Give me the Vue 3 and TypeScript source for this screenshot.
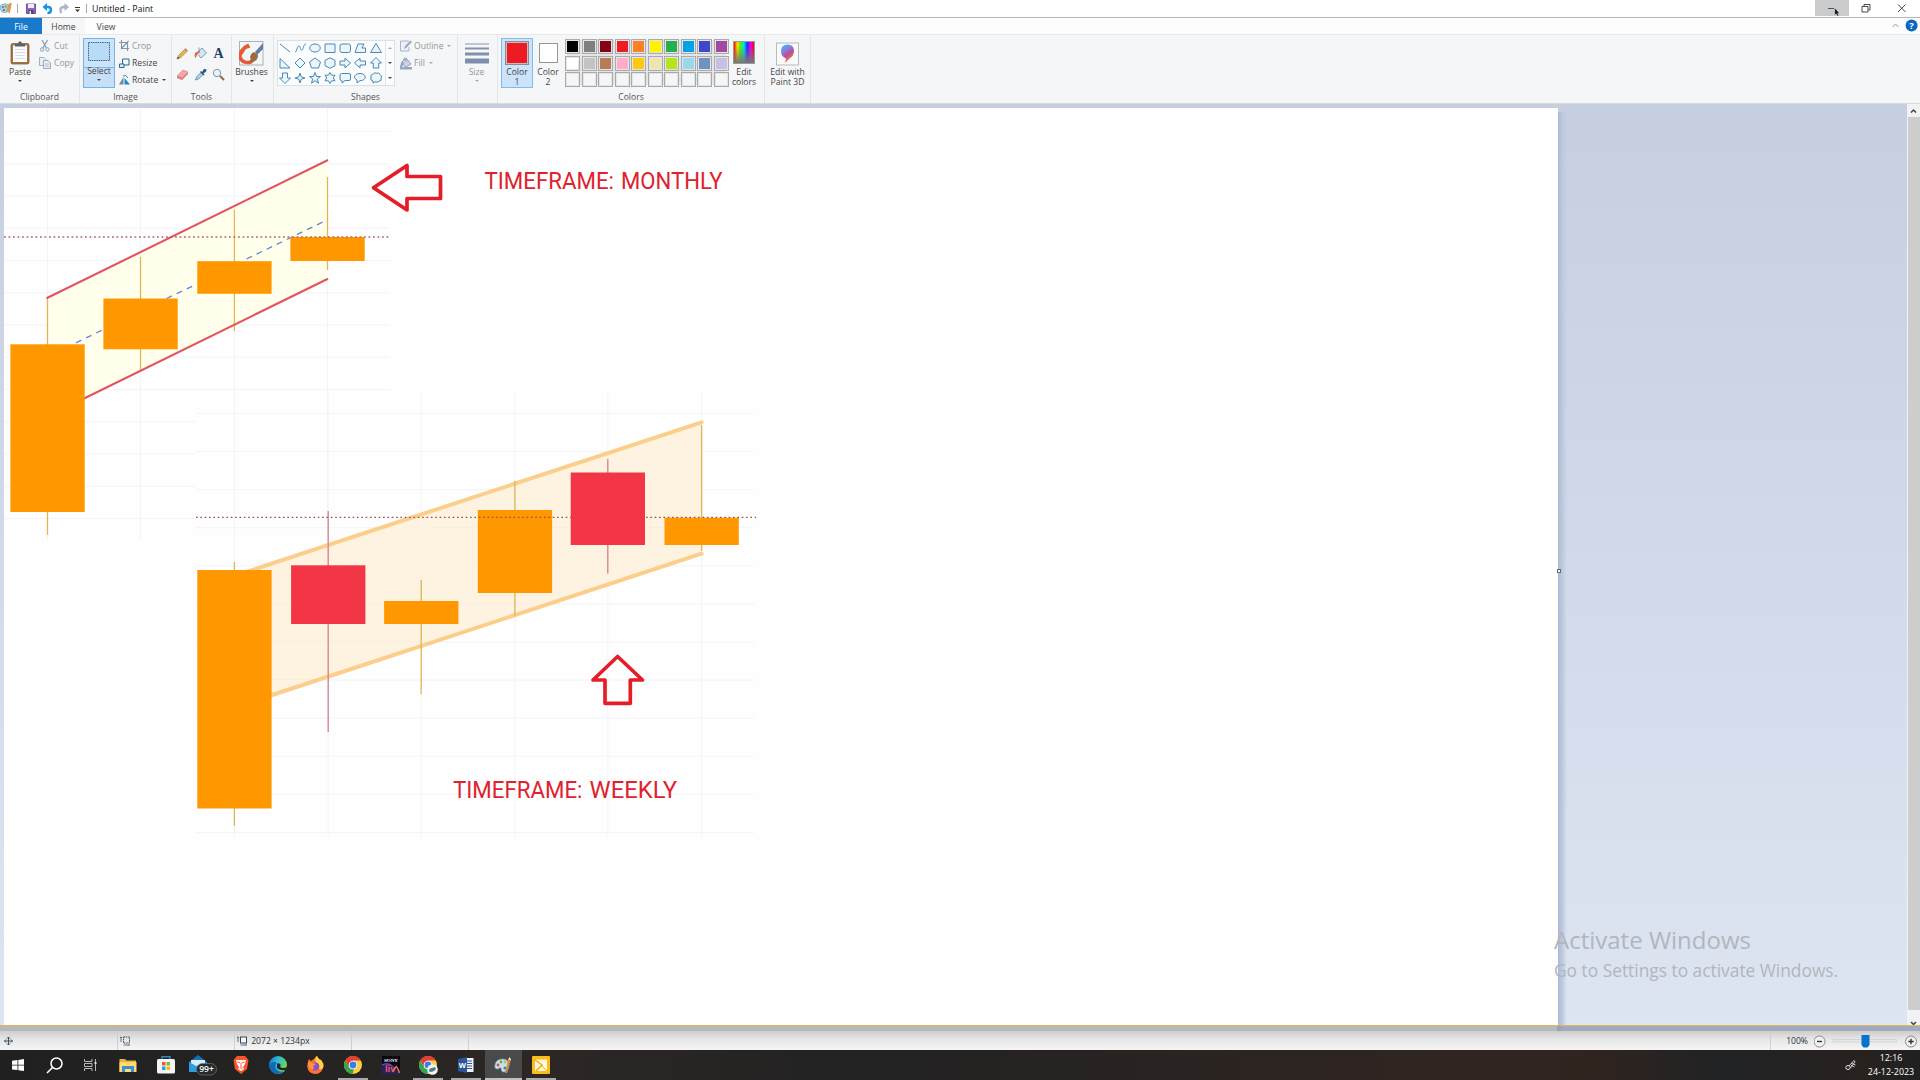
<script setup lang="ts">
interface Candle {
  x: number
  top: number
  bottom: number
  high: number
  low: number
  down?: boolean
}

const shapes: string[] = [
  'M1 2L11 10',
  'M1 10C3 10 3 4 5 4S6 9 8 8S9 2 12 2',
  'M6 2C13 2 13 10 6 10S-1 2 6 2Z',
  'M1 2H11V10.500H1Z',
  'M3 2H9.500Q11.500 2 11.500 4V8.500Q11.500 10.500 9.500 10.500H3Q1 10.500 1 8.500V4Q1 2 3 2Z',
  'M4 2H10L8 6H11.500V10.500H1Z',
  'M6 1.500L11.500 10.500H.5Z',
  'M1 1.500V11H11Z',
  'M6 1L11 6L6 11L1 6Z',
  'M6 1L11.500 5L9.500 11H2.500L.5 5Z',
  'M6 .8L11 3.400V8.700L6 11.300L1 8.700V3.400Z',
  'M1 4H6V1L11.500 6L6 11V8H1Z',
  'M11.500 4H6V1L.5 6L6 11V8H11.500Z',
  'M6 .5L11.500 6H8.700V11H3.300V6H.5Z',
  'M6 11.500L11.500 6H8.500V1H3.500V6H.5Z',
  'M6 1L7.200 4.800L11 6L7.200 7.200L6 11L4.800 7.200L1 6L4.800 4.800Z',
  'M6 .5L7.500 4.500H11.500L8.300 7L9.500 11.200L6 8.700L2.500 11.200L3.700 7L.5 4.500H4.500Z',
  'M6 .5L7.600 3.200H11L9.300 6L11 8.800H7.600L6 11.500L4.400 8.800H1L2.700 6L1 3.200H4.400Z',
  'M2.500 1.500H10Q11.500 1.500 11.500 3V7Q11.500 8.500 10 8.500H6L3 11V8.500H2.500Q1 8.500 1 7V3Q1 1.500 2.500 1.500Z',
  'M6 1.500C13 1.500 13 8.700 6 8.700L3 11V8C-1.500 6 .5 1.500 6 1.500Z',
  'M3 2Q4.500 0 6.500 1.300Q9 0 10 2.500Q12.500 4 11.200 6Q12 9 9 9.300Q7 11 5 9.700L3 11.200V9Q0 8.500 1 6Q-.3 3 3 2Z',
]

const palette: string[] = [
  '#000000', '#7f7f7f', '#880015', '#ed1c24', '#ff7f27', '#fff200', '#22b14c', '#00a2e8', '#3f48cc', '#a349a4',
  '#ffffff', '#c3c3c3', '#b97a57', '#ffaec9', '#ffc90e', '#efe4b0', '#b5e61d', '#99d9ea', '#7092be', '#c8bfe7',
  '', '', '', '', '', '', '', '', '', '',
]

const monthly: Candle[] = [
  { x: 47.5, top: 344.3, bottom: 512, high: 298, low: 535 },
  { x: 140.5, top: 298.5, bottom: 349.3, high: 257, low: 370 },
  { x: 234.4, top: 261.2, bottom: 293.8, high: 210, low: 331 },
  { x: 327.5, top: 237, bottom: 261, high: 177, low: 270 },
]

const weekly: Candle[] = [
  { x: 234.4, top: 570, bottom: 808.5, high: 562, low: 826 },
  { x: 328.2, top: 565.3, bottom: 624, high: 511, low: 732, down: true },
  { x: 421.2, top: 601, bottom: 624, high: 580, low: 694 },
  { x: 514.9, top: 510, bottom: 593, high: 481, low: 616 },
  { x: 607.8, top: 472.5, bottom: 545, high: 459, low: 573.5, down: true },
  { x: 701.6, top: 517.7, bottom: 545, high: 425, low: 551 },
]

const monthlyRows: number[] = Array.from({ length: 13 }, (_, i) => 131.5 + i * 32.25)
const weeklyRows: number[] = Array.from({ length: 12 }, (_, i) => 413.4 + i * 38.1)
</script>

<template>
  <div class="screen">
    <header class="title">
      <svg class="quick" width="90" height="17" viewBox="0 0 90 17">
        <path d="M.5 9Q-1 4 4 4Q9 3 9.500 8Q9 13 4 12.500Q1 12.500 .5 9Z" fill="#a9d3e5" stroke="#6ba3bd" stroke-width=".7" />
        <circle cx="3" cy="7" r="1.100" fill="#d2504b" /><circle cx="5.800" cy="6.500" r="1.100" fill="#6eac47" /><circle cx="4" cy="10" r="1.100" fill="#3979b8" />
        <path d="M7 11.500L9.500 3.500M9 13L11 3" stroke="#e09643" stroke-width="1.600" />
        <path d="M17.500 4V13M86.500 4V13" stroke="#a5a5a5" />
        <path d="M26.500 4H35.500V13.500H26.500Z" fill="#8d69b5" stroke="#70539b" /><path d="M28 4H34V8H28Z" fill="#f1edf8" /><path d="M28.500 10H33.500V14H28.500Z" fill="#57417d" /><path d="M29.500 11H31V14H29.500Z" fill="#eee" />
        <path d="M45 7H48Q51 7 51 10Q51 13 47.500 13" fill="none" stroke="#1597df" stroke-width="2.400" /><path d="M42.500 7L47 3V11Z" fill="#1597df" />
        <path d="M67 7H64Q60.500 7 60.500 10Q60.500 12 61.500 13" fill="none" stroke="#a9b6c9" stroke-width="2.400" /><path d="M69 7L64.500 3V11Z" fill="#a9b6c9" />
        <path d="M75 7.500H80" stroke="#333" /><path d="M75 9.500H80L77.500 12Z" fill="#333" />
      </svg>
      <span class="caption">Untitled - Paint</span>
      <span class="grow"></span>
      <svg width="105" height="17" viewBox="0 0 105 17">
        <path d="M0 0H34V16H0Z" fill="#cacbcc" />
        <path d="M13 8.500H19" stroke="#555" />
        <path d="M47.500 6.500H53.500V12H47.500ZM49.500 6V4.500H55.500V10H54" transform="translate(-.5 0)" fill="none" stroke="#333" stroke-width=".9" />
        <path d="M83 4.500L90.500 12M90.500 4.500L83 12" stroke="#333" stroke-width=".9" />
        <path d="M19.800 8V15L21.300 13.700L22.300 16L23.600 15.400L22.600 13.200H24.300Z" fill="#111" stroke="#eee" stroke-width=".3" />
      </svg>
    </header>

    <nav class="tabs">
      <span class="tab file">File</span>
      <span class="tab home">Home</span>
      <span class="tab view">View</span>
      <span class="grow"></span>
      <svg width="32" height="16" viewBox="0 0 32 16">
        <path d="M4.500 9L7.500 6L10.500 9" fill="none" stroke="#999" />
        <circle cx="23.600" cy="7.600" r="6" fill="#0a68bd" />
        <text x="23.600" y="11" text-anchor="middle" font-size="9.500" font-weight="700" fill="#fff">?</text>
      </svg>
    </nav>

    <section class="ribbon">
      <div class="group clipboard">
        <div class="body">
          <div class="big paste">
            <svg width="20" height="25" viewBox="0 0 20 25">
              <rect x="1" y="3" width="18" height="20.500" rx="1.500" fill="#a47644" stroke="#7d5730" stroke-width=".7" />
              <path d="M3 5H17V21.500H3Z" fill="#fbfcfd" /><path d="M5 9H15M5 12H15M5 15H15M5 18H15" stroke="#cad0d7" stroke-width=".7" />
              <path d="M5 6V3.500H8Q8 .8 10 .8T12 3.500H15V6Z" fill="#5e6268" />
            </svg>
            <span>Paste</span><i class="caret"></i>
          </div>
          <div class="stack dim">
            <div class="row"><svg width="12" height="12" viewBox="0 0 12 12"><path d="M3 0L7.500 8M8.500 0L4 8" stroke="#8d9db3" stroke-width="1.300" /><circle cx="3" cy="9.500" r="1.700" fill="none" stroke="#8d9db3" /><circle cx="8.500" cy="9.500" r="1.700" fill="none" stroke="#8d9db3" /></svg><span>Cut</span></div>
            <div class="row"><svg width="12" height="12" viewBox="0 0 12 12"><path d="M.5 .5H5L7 2.500V8.500H.5Z" fill="#e9eef4" stroke="#a1b0c4" /><path d="M4.500 3.500H9L11.500 6V11.500H4.500Z" fill="#e9eef4" stroke="#9aabc1" /><path d="M6 7H10M6 9H10" stroke="#a1b0c4" stroke-width=".8" /></svg><span>Copy</span></div>
          </div>
        </div>
        <footer>Clipboard</footer>
      </div>

      <div class="group image">
        <div class="body">
          <div class="big select">
            <svg width="24" height="24" viewBox="0 0 24 24"><rect x="1.500" y="2.500" width="21" height="18" fill="#b8dbf8" stroke="#3a6687" stroke-dasharray="1.500 .8" /></svg>
            <span>Select</span><i class="caret"></i>
          </div>
          <div class="stack tall">
            <div class="row dim"><svg width="11" height="12" viewBox="0 0 11 12"><path d="M2.500 0V8.500H10M0 2.500H8.500V11M2 9L9.500 1" fill="none" stroke="#8295ad" stroke-width="1.100" /></svg><span>Crop</span></div>
            <div class="row"><svg width="11" height="12" viewBox="0 0 11 12"><path d="M3.500 2H10V8H3.500Z" fill="#eef7fd" stroke="#2d6991" /><path d="M.5 7H5V10.500H.5Z" fill="#d7edf9" stroke="#2d6991" /></svg><span>Resize</span></div>
            <div class="row"><svg width="11" height="12" viewBox="0 0 11 12"><path d="M0 10.500L4.500 3V10.500Z" fill="#73889d" /><path d="M5.500 10.500V4L11 10.500Z" fill="#1c87c9" /><path d="M4 2Q7 0 9 4" fill="none" stroke="#3c8bc0" /></svg><span>Rotate</span><i class="caret side"></i></div>
          </div>
        </div>
        <footer>Image</footer>
      </div>

      <div class="group tools">
        <div class="toolgrid">
          <svg viewBox="0 0 13 13"><path d="M1 12L2.500 8.500L9.500 1.500L11.700 3.700L4.500 10.800Z" fill="#e7b34f" stroke="#a27935" stroke-width=".6" /><path d="M9.500 1.500L11.700 3.700L10.400 5L8.200 2.800Z" fill="#dc8985" /><path d="M1 12L2 9.800L3.300 11Z" fill="#333" /></svg>
          <svg viewBox="0 0 13 13"><path d="M4 5L8 1L12.500 6L7 11L3.500 7Z" fill="#d5e5f1" stroke="#648cad" stroke-width=".8" /><path d="M5 .5V6" stroke="#677" stroke-width=".7" /><path d="M5 4L1 6Q0 9 1.500 11Q3 9 3 7L6 5Z" fill="#e95d31" /></svg>
          <svg viewBox="0 0 13 13"><text x="6.500" y="11.200" text-anchor="middle" class="serif" font-size="14" font-weight="700" fill="#23405d">A</text></svg>
          <svg viewBox="0 0 13 13"><path d="M1 8L7 2L12 4L6 10Z" fill="#f3a9a7" stroke="#c96c6c" stroke-width=".5" /><path d="M1 8L6 10V12L1 10ZM6 10L12 4V6L6 12Z" fill="#de7979" /></svg>
          <svg viewBox="0 0 13 13"><path d="M1.500 12L2.500 9L7 4.500L9 6.500L4.500 11Z" fill="#a9d8ef" stroke="#40789d" stroke-width=".7" /><path d="M6 4L7 3L8 4L10 1Q12 .5 12.500 2Q13 3 9.500 5.500L10.500 6.500L9.500 7.500Z" fill="#285781" /></svg>
          <svg viewBox="0 0 13 13"><circle cx="5" cy="5" r="3.700" fill="#e2f1fa" stroke="#8796a4" /><path d="M8 8L12 12" stroke="#886d50" stroke-width="2" /></svg>
        </div>
        <footer>Tools</footer>
      </div>

      <div class="group brushes">
        <div class="big">
          <svg width="25" height="26" viewBox="0 0 25 26"><rect x=".5" y="1.500" width="23.500" height="23.500" fill="#f4f7fa" stroke="#aab1ba" /><path d="M10 5Q1 9 1 17Q3 24 12 22L16 18" fill="none" stroke="#e55b35" stroke-width="3.500" /><path d="M3 14Q6 6 11 7" fill="none" stroke="#e96036" stroke-width="2" /><path d="M16 12L24 3V9L18 15Z" fill="#607e9e" /><path d="M15 12L19 15Q19 23 9 22Q13 21 11 17Q12 13 15 12Z" fill="#9c6a3f" /></svg>
          <span>Brushes</span><i class="caret"></i>
        </div>
      </div>

      <div class="group shapes">
        <div class="body">
          <div class="gallery">
            <div class="shapegrid">
              <svg v-for="(path, i) in shapes" :key="i" viewBox="0 0 13 12.500"><path :d="path" :fill="i < 2 ? 'none' : '#eaf5fc'" stroke="#4384b0" stroke-width=".95" /></svg>
            </div>
            <div class="scroll"><i class="caret up"></i><i class="caret"></i><i class="caret more"></i></div>
          </div>
          <div class="stack dim">
            <div class="row"><svg width="12" height="12" viewBox="0 0 12 12"><path d="M9 1H.5V11H9V7" fill="#edf1f7" stroke="#a9b6cb" /><path d="M4 9L5 6L10.500 .5L12 2L6.500 7.500Z" fill="#9aa9c2" /></svg><span>Outline</span><i class="caret side"></i></div>
            <div class="row"><svg width="12" height="13" viewBox="0 0 12 13"><path d="M2 5L6 1L11 7L6 10L2 7Z" fill="#cbd5e4" stroke="#8fa0bb" /><path d="M4 4V1.500Q5 0 6 2V5" fill="none" stroke="#8fa0bb" /><path d="M0 10H12V12.500H0Z" fill="#97a7c1" /><path d="M1 6Q3 4 4 6L2 10H0Z" fill="#92a2be" /></svg><span>Fill</span><i class="caret side"></i></div>
          </div>
        </div>
        <footer>Shapes</footer>
      </div>

      <div class="group size dim">
        <div class="big">
          <svg width="24" height="25" viewBox="0 0 24 25"><path d="M0 3.500H24" stroke="#8795b1" /><path d="M0 8H24" stroke="#8391ad" stroke-width="2" /><path d="M0 13.500H24" stroke="#8190ad" stroke-width="3" /><path d="M0 20.500H24" stroke="#7d8dac" stroke-width="5" /></svg>
          <span>Size</span><i class="caret"></i>
        </div>
      </div>

      <div class="group colors">
        <div class="body">
          <div class="big color one"><b class="swatch red"></b><span>Color</span><span>1</span></div>
          <div class="big color two"><b class="swatch white"></b><span>Color</span><span>2</span></div>
          <div class="palette"><i v-for="(c, i) in palette" :key="i" :style="{ background: c || '#f5f6f7' }"></i></div>
          <div class="big edit"><b class="spectrum"></b><span>Edit</span><span>colors</span></div>
        </div>
        <footer>Colors</footer>
      </div>

      <div class="group paint3d">
        <div class="big">
          <svg width="23" height="25" viewBox="0 0 23 25">
            <defs><linearGradient id="drop" x1="0" y1="0" x2=".5" y2="1"><stop offset="0" stop-color="#35c5ef" /><stop offset=".35" stop-color="#7e86e5" /><stop offset=".65" stop-color="#c1489b" /><stop offset="1" stop-color="#f08a35" /></linearGradient></defs>
            <rect x=".5" y="2.500" width="22" height="22" fill="#fafafa" stroke="#b6b9bd" />
            <path d="M11.500 4Q18 4 18 10.500Q18 15 13.500 18L9 22.500L10 18Q5 16 5 10.500Q5 4 11.500 4Z" fill="url(#drop)" />
          </svg>
          <span>Edit with</span><span>Paint 3D</span>
        </div>
      </div>
    </section>

    <main class="workspace">
      <div class="sheet">
        <svg width="1553" height="917" viewBox="4 108 1553 917">
          <g stroke="#f3f3f9" stroke-width="1">
            <line v-for="(y, i) in monthlyRows" :key="'m' + i" x1="4" :x2="i > 8 ? 195 : 390" :y1="y" :y2="y" />
            <line v-for="c in monthly" :key="'mv' + c.x" :x1="c.x" :x2="c.x" y1="108" y2="541" />
          </g>
          <polygon points="47.500,298 328,160 328,279 47.500,416" fill="#ffffec" />
          <g stroke="#f5f5e5"><line x1="140.500" x2="140.500" y1="252" y2="370" /><line x1="234.500" x2="234.500" y1="206" y2="324" /></g>
          <path d="M76 342.800L103 329.700M166.500 298.500L197 284M246.500 259L328 219.500" stroke="#6385d8" stroke-width="1.300" stroke-dasharray="6 5.200" />
          <g v-for="c in monthly" :key="'mc' + c.x">
            <line :x1="c.x" :x2="c.x" :y1="c.high" :y2="c.low" stroke="#e2b653" stroke-width="1.300" />
          </g>
          <path d="M46.500 298.300L328 160M83 399L328 278.700" fill="none" stroke="#e2545f" stroke-width="2.100" />
          <rect v-for="c in monthly" :key="'mb' + c.x" :x="c.x - 37.1" :y="c.top" width="74.3" :height="c.bottom - c.top" fill="#ff9800" />
          <line x1="4" x2="389" y1="237" y2="237" stroke="#b85f6e" stroke-width="1.500" stroke-dasharray="1.800 2.700" />

          <g stroke="#f3f3f9">
            <line v-for="y in weeklyRows" :key="y" x1="196" x2="754" :y1="y" :y2="y" />
            <line v-for="c in weekly" :key="'wv' + c.x" :x1="c.x" :x2="c.x" y1="392" y2="837" />
          </g>
          <polygon points="235,577 701.600,422.500 701.600,553.700 235,707.700" fill="#fef2e0" />
          <g stroke="#faeedf"><path d="M328.200 547V676M421.200 516V646M514.900 485V616M607.800 454V584M430 527.500H701M340 565.700H664M272 604H548M272 641.500H436M272 679.500H320" /></g>
          <path d="M240 574L701.600 422.300M260 699L701.600 553.700" stroke="#fbcf8b" stroke-width="4" stroke-linecap="round" />
          <line v-for="c in weekly" :key="'ww' + c.x" :x1="c.x" :x2="c.x" :y1="c.high" :y2="c.low" :stroke="c.down ? '#d37f8c' : '#deb552'" stroke-width="1.300" />
          <rect v-for="c in weekly" :key="'wb' + c.x" :x="c.x - 37.1" :y="c.top" width="74.3" :height="c.bottom - c.top" :fill="c.down ? '#f23645' : '#ff9800'" />
          <path d="M196 517.400H571M646 517.400H756" stroke="#9c4c4e" stroke-width="1.400" stroke-dasharray="1.600 2.750" />

          <g fill="none" stroke="#e51d28" stroke-width="3.700" stroke-linejoin="round">
            <path d="M373.500 187.700L407 165.500V176.500H440.500V198.500H407V210Z" />
            <path d="M617.600 656.500L642.500 680H630.300V703.300H605V680H593Z" />
          </g>
          <g class="note" font-size="23.200" fill="#df222e">
            <text y="189.300"><tspan x="484.500" textLength="129.500" lengthAdjust="spacingAndGlyphs">TIMEFRAME:</tspan>&#32;<tspan x="621" textLength="101.500" lengthAdjust="spacingAndGlyphs">MONTHLY</tspan></text>
            <text y="798"><tspan x="453" textLength="129.500" lengthAdjust="spacingAndGlyphs">TIMEFRAME:</tspan>&#32;<tspan x="589.500" textLength="87.500" lengthAdjust="spacingAndGlyphs">WEEKLY</tspan></text>
          </g>
        </svg>
        <i class="handle"></i>
      </div>
      <div class="surround"></div>
      <div class="scrollbar">
        <svg width="13" height="13" viewBox="0 0 13 13"><path d="M4 8.500L6.500 6L9 8.500" fill="none" stroke="#444" stroke-width="1.500" /></svg>
        <div class="thumb"></div>
        <svg width="13" height="16" viewBox="0 0 13 16"><path d="M4 12L6.500 14.500L9 12" fill="none" stroke="#444" stroke-width="1.500" /></svg>
      </div>
      <div class="watermark"><strong>Activate Windows</strong><span>Go to Settings to activate Windows.</span></div>
    </main>

    <div class="edge"></div>
    <section class="status">
      <div class="cell first"><svg width="9" height="10" viewBox="0 0 9 10"><path d="M4.500 1V9M.5 5H8.500M3 2.500L4.500 1L6 2.500M3 7.500L4.500 9L6 7.500M2 3.500L.5 5L2 6.500M7 3.500L8.500 5L7 6.500" fill="none" stroke="#33465d" stroke-width=".9" /></svg></div>
      <div class="cell"><svg width="11" height="10" viewBox="0 0 11 10"><path d="M1 1V6M0 2L1 .8L2 2M3.500 9H9M8.500 8L9.700 9L8.500 10" fill="none" stroke="#53657a" stroke-width=".9" /><rect x="3.500" y="1" width="6" height="6" fill="none" stroke="#33465d" stroke-dasharray="1.500 .8" /></svg></div>
      <div class="cell"><svg width="11" height="10" viewBox="0 0 11 10"><path d="M1 1V6M0 2L1 .8L2 2M3.500 9H9M8.500 8L9.700 9L8.500 10" fill="none" stroke="#53657a" stroke-width=".9" /><rect x="3.500" y="1" width="6" height="6" fill="#fafafa" stroke="#33465d" /></svg><span>2072 × 1234px</span></div>
      <div class="cell"></div>
      <div class="cell wide"></div>
      <div class="zoom">
        <span>100%</span>
        <svg width="106" height="19" viewBox="0 0 106 19">
          <circle cx="5.500" cy="9.500" r="5.500" fill="#f2f2f2" stroke="#888" /><path d="M3 9.500H8" stroke="#333" stroke-width="1.400" />
          <rect x="19.500" y="7.500" width="63" height="2.500" fill="#e6e6e6" stroke="#d0d0d0" stroke-width=".8" />
          <path d="M47.500 3H55.500V13L53.500 15.500H49.500L47.500 13Z" fill="#0873cc" />
          <circle cx="97" cy="9.500" r="5.500" fill="#f2f2f2" stroke="#888" /><path d="M94.300 9.500H99.700M97 6.800V12.200" stroke="#333" stroke-width="1.400" />
        </svg>
      </div>
    </section>

    <footer class="taskbar">
      <div class="slot sys"><svg width="12" height="12" viewBox="0 0 12 12"><path d="M0 1.700L5.500 1V5.700H0ZM6.300 .9L12 0V5.700H6.300ZM0 6.400H5.500V11.100L0 10.400ZM6.300 6.400H12V12L6.300 11.200Z" fill="#fff" /></svg></div>
      <div class="slot sys"><svg width="17" height="17" viewBox="0 0 17 17"><circle cx="10.500" cy="6.500" r="5.500" fill="none" stroke="#fff" stroke-width="1.500" /><path d="M6.500 10.500L1 16" stroke="#fff" stroke-width="1.600" /></svg></div>
      <div class="slot sys"><svg width="13" height="12" viewBox="0 0 13 12"><path d="M.5 0V2.500H8V0M.5 12V9.500H8V12M.5 4.500H8V7.500H.5ZM11.500 0V12" fill="none" stroke="#b8b8b8" /><path d="M10.500 3H12.500V5H10.500Z" fill="#ddd" /></svg></div>
      <div class="slot first"><svg width="18" height="15" viewBox="0 0 18 15"><path d="M.5 1H6L7.500 2.500H17V14H.5Z" fill="#e9b23d" /><path d="M.5 4H17.500V14H.5Z" fill="#ffda74" /><path d="M3 8H15V14H12V11H6V14H3Z" fill="#3c8fd2" /></svg></div>
      <div class="slot"><svg width="18" height="18" viewBox="0 0 18 18"><path d="M5 4V.7H13V4" fill="none" stroke="#3189b5" stroke-width="1.400" /><rect y="3" width="18" height="14.500" rx="1.500" fill="#f3f4f4" /><path d="M5 6H8.500V9.500H5Z" fill="#f15a29" /><path d="M9.500 6H13V9.500H9.500Z" fill="#7ebb3b" /><path d="M5 10.500H8.500V14H5Z" fill="#25a0dc" /><path d="M9.500 10.500H13V14H9.500Z" fill="#fbb914" /></svg></div>
      <div class="slot"><svg class="mail" width="30" height="22" viewBox="0 0 30 22"><path d="M1 8L10 1L19 8V18H1Z" fill="#1670b5" /><path d="M3 6H17V14H3Z" fill="#d5eefb" /><path d="M1 8L10 13L19 8V18H1Z" fill="#2b9de0" /><rect x="8.500" y="9.500" width="20" height="11.500" rx="5.750" fill="#252a2d" stroke="#747474" stroke-width=".7" /><text x="18.500" y="18.300" text-anchor="middle" font-size="8.600" font-weight="600" fill="#fff">99+</text></svg></div>
      <div class="slot"><svg width="16" height="18" viewBox="0 0 16 18"><path d="M4 0H12L15.500 4L14 13L8 18L2 13L.5 4Z" fill="#fb542b" /><path d="M3 4H13L12 8L10 11L11 13L8 15L5 13L6 11L4 8Z" fill="#fff" /><path d="M4.500 6L7 7M11.500 6L9 7M8 7V11M6.500 12H9.500" stroke="#fb542b" stroke-width="1" /></svg></div>
      <div class="slot"><svg width="18" height="18" viewBox="0 0 18 18"><defs><linearGradient id="sea" x2="1" y2=".3"><stop stop-color="#1876ca" /><stop offset=".5" stop-color="#2bb8de" /><stop offset="1" stop-color="#6ad950" /></linearGradient></defs><circle cx="9" cy="9" r="9" fill="url(#sea)" /><path d="M0 9Q3 4 8 7Q5 9 7 13Q10 17 15 15Q12 18 8 18Q1 17 0 9Z" fill="#1267b8" /><path d="M9 7Q13 8 11 11Q14 13 18 11L17 14Q11 15 8 12Q7 9 9 7Z" fill="#22282b" /></svg></div>
      <div class="slot"><svg width="17" height="18" viewBox="0 0 17 18"><path d="M2 3L4 5L7 3Q9 0 10 0Q11 3 14 4Q18 8 16 12Q14 18 8 18Q1 17 .3 11Q0 7 2 3Z" fill="#ff7332" /><path d="M10 0Q11 3 14 4Q17 8 16 12Q14 14 12 13Q14 8 9 6Q7 4 10 0Z" fill="#ffd743" /><circle cx="8" cy="10.500" r="4" fill="#8750d9" /><path d="M1 6L5 7L9 8L6 10L7 13Q3 14 2 10Z" fill="#ff9830" /></svg></div>
      <div class="slot open"><svg width="18" height="18" viewBox="0 0 18 18"><circle cx="9" cy="9" r="9" fill="#ffce42" /><path d="M1.200 4.500A9 9 0 0 1 16.800 4.500H9L5.100 11.300Z" fill="#e33f34" /><path d="M1.200 4.500L5.100 11.300Q7 14 10 13L8.500 18A9 9 0 0 1 1.200 4.500Z" fill="#30a852" /><circle cx="9" cy="9" r="4.300" fill="#fff" /><circle cx="9" cy="9" r="3.400" fill="#3b7de5" /></svg></div>
      <div class="slot"><svg class="live" width="18" height="18" viewBox="0 0 18 18"><rect width="18" height="18" fill="#080714" /><path d="M0 8Q6 5 10 9T18 15V18H0Z" fill="#29205d" /><path d="M0 9Q7 6 11 11" stroke="#6f47bd" fill="none" stroke-width="1.200" /><path d="M11 16L14 10.500Q15.500 11 17.500 17" stroke="#ee7a3d" fill="none" stroke-width="1.400" /><text x="9" y="5.500" text-anchor="middle" class="serif" font-size="4.800" font-weight="700" fill="#fff" textLength="14" lengthAdjust="spacingAndGlyphs">SONY</text><text x="3" y="16" font-size="8.500" font-weight="700" fill="#ee5a72">liv</text></svg></div>
      <div class="slot open split"><svg width="20" height="19" viewBox="-1 0 20 19"><circle cx="9" cy="9" r="9" fill="#ffce42" /><path d="M1.200 4.500A9 9 0 0 1 16.800 4.500H9L5.100 11.300Z" fill="#e33f34" /><path d="M1.200 4.500L5.100 11.300Q7 14 10 13L8.500 18A9 9 0 0 1 1.200 4.500Z" fill="#30a852" /><circle cx="9" cy="9" r="4.300" fill="#fff" /><circle cx="9" cy="9" r="3.400" fill="#3b7de5" /><circle cx="13.500" cy="13.500" r="5.300" fill="#f2f4f4" /><path d="M10 15Q10 12 13 12L16 11L17 13Q15 16 11 16Z" fill="#527e80" /></svg></div>
      <div class="slot open"><svg width="16" height="16" viewBox="0 0 16 16"><path d="M7 1H15.500V15H7Z" fill="#eef3fb" /><path d="M9 4H14M9 6.500H14M9 9H14M9 11.500H14" stroke="#2b579a" stroke-width="1" /><path d="M0 2L9 0V16L0 14Z" fill="#2b579a" /><text x="4.400" y="10.700" text-anchor="middle" font-size="7.500" font-weight="700" fill="#fff">W</text></svg></div>
      <div class="slot open current"><svg width="18" height="18" viewBox="0 0 18 18"><path d="M1 9Q2 3 9 3Q16 4 15 10Q14 16 9 16Q7 15 7 12Q6 11 4 13Q0 13 1 9Z" fill="#c7e1e9" stroke="#82acbb" stroke-width=".7" /><circle cx="4" cy="9" r="1.400" fill="#d64a42" /><circle cx="7" cy="6" r="1.400" fill="#68ac4b" /><circle cx="11" cy="6" r="1.400" fill="#e3b62f" /><circle cx="11" cy="12" r="1.500" fill="#3782bf" /><path d="M11 17L14 4L16 1L17 4L13 17Z" fill="#cc8949" /><path d="M14 4L15.500 1L17 4Z" fill="#efe0c0" /></svg></div>
      <div class="slot open"><svg width="18" height="18" viewBox="0 0 18 18"><rect width="18" height="18" rx="1" fill="#fbbd16" /><rect x="3" y="3.500" width="12" height="11.500" fill="#fff8df" /><path d="M2.500 3.500L10 9L4 15" fill="none" stroke="#f3ad12" stroke-width="1.500" /><path d="M9 9L15 15" stroke="#f3ad12" stroke-width="1" /></svg></div>
      <span class="grow"></span>
      <svg class="tray" width="12" height="12" viewBox="0 0 12 12"><ellipse cx="3" cy="8.500" rx="2.200" ry="2" fill="none" stroke="#ddd" /><path d="M4 7L9 1.500L10 3L5.500 9M6 4L10.500 6M6 6L9.500 8" fill="none" stroke="#ddd" stroke-width=".9" /></svg>
      <div class="clock"><span>12:16</span><span>24-12-2023</span></div>
    </footer>
  </div>
</template>

<style>
body { margin: 0; overflow: hidden; }
</style>

<style scoped>
.screen { width: 1920px; height: 1080px; display: flex; flex-direction: column; overflow: hidden; background: #fff; color: #444; font: 8.6px/10px "Open Sans", "Noto Sans", sans-serif; }
svg { display: block; flex: none; }
.serif { font-family: "Liberation Serif", serif; }
.grow { flex: 1; }
.title { height: 17px; flex: none; display: flex; align-items: center; border-bottom: 1px solid #b5b5b5; }
.caption { padding-left: 2px; color: #111; font-size: 8.8px; }
.tabs { height: 16px; flex: none; display: flex; background: #fdfdfd; }
.tab { display: flex; justify-content: center; align-items: center; padding-top: 1px; box-sizing: border-box; }
.file { width: 42px; background: #1979ca; color: #fff; }
.home { width: 43px; background: #f5f6f7; }
.view { width: 42px; }
.ribbon { height: 70px; flex: none; display: flex; background: #f5f6f7; border-bottom: 1px solid #dadbdc; border-top: 1px solid #e9eaeb; box-sizing: border-box; }
.group { box-sizing: border-box; padding-top: 3px; border-right: 1px solid #e4e5e7; display: flex; flex-direction: column; }
.group footer { margin-top: auto; height: 11.5px; text-align: center; color: #555; }
.body { display: flex; height: 50px; }
.clipboard { width: 80px; }
.image { width: 92px; }
.tools { width: 60px; }
.brushes { width: 42px; }
.brushes .big { margin-left: -2px; }
.shapes { width: 184px; }
.size { width: 40px; }
.size .big { margin-left: -2px; }
.colors { width: 267px; }
.paint3d { width: 46px; }
.big { display: flex; flex-direction: column; align-items: center; height: 50px; box-sizing: border-box; white-space: nowrap; }
.big > svg { margin: 2px 0 1px; height: 26px; }
.paste { width: 40px; }
.caret { width: 0; height: 0; border: 2.5px solid transparent; border-top: 2.5px solid #444; border-bottom: 0; margin-top: 3px; }
.dim { color: #969696; }
.dim .caret { border-top-color: #aaa; }
.side { margin: 0 0 0 2px; }
.stack { display: flex; flex-direction: column; }
.row { height: 16.7px; display: flex; align-items: center; gap: 2px; white-space: nowrap; }
.clipboard .row { gap: 3px; margin-left: -1px; }
.select { width: 32px; margin-left: 3px; background: linear-gradient(#cbe3fb 28px, #7cb6ea 28px, #7cb6ea 29px, #c6e0fa 29px); border: 1px solid #78b3e8; }
.select > svg { margin: 1px 0 2px; height: 24px; }
.tall { margin-left: 4px; }
.toolgrid { display: grid; grid-template-columns: repeat(3, 13px); gap: 8px 5px; padding: 9px 0 0 4px; }
.toolgrid svg { width: 13px; height: 13px; }
.gallery { width: 118px; height: 46px; margin: 2px 5px 0 3px; box-sizing: border-box; display: flex; border: 1px solid #dcdfe3; background: #fafcfd; }
.shapegrid { display: grid; grid-template-columns: repeat(7, 15.1px); grid-auto-rows: 15px; width: 107px; flex: none; padding: 1px 0 0 1px; box-sizing: border-box; }
.shapegrid svg { width: 13px; height: 12.5px; }
.scroll { flex: 1; border-left: 1px solid #e2e4e7; display: flex; flex-direction: column; align-items: center; justify-content: space-around; }
.scroll .caret { border-width: 2px; border-bottom: 0; margin: 0; }
.scroll .up { transform: rotate(180deg); opacity: .45; }
.scroll .more { box-shadow: 0 -2px 0 -1px #555; }
.color { width: 32px; }
.color span:nth-child(2) { margin-top: 2px; }
.one { margin-left: 3px; background: #cbe3fb; border: 1px solid #84b9e9; }
.one span:nth-child(2) { margin-top: 3px; }
.two { width: 30px; }
.swatch { box-sizing: border-box; border: 1px solid #969696; outline: 1px solid #b9b9b9; outline-offset: 0; }
.red { width: 22px; height: 22px; margin-top: 3px; border: 1px solid #cbb; background: #ed1c24; outline-color: #8c8c8c; }
.white { width: 19px; height: 20px; margin: 5px 0 2px; background: #fff; outline: 0; }
.palette { width: 164px; height: 49px; margin-left: 2px; display: grid; grid-template-columns: repeat(10, 15px); grid-auto-rows: 15px; gap: 1.5px; padding-top: 1px; background: linear-gradient(#e3e5e7, #e3e5e7) 2px 2px / 159px 45px no-repeat; box-sizing: border-box; }
.palette i { border: 1px solid #aaa; outline: 1px solid #e5e5e5; outline-offset: -2px; }
.edit { width: 32px; margin-left: -1px; }
.spectrum { width: 20px; height: 21px; margin: 3px 0; border: 1px solid #999; background: linear-gradient(transparent 20%, #777), linear-gradient(90deg, #f00, #fd0, #3f0, #0df, #22f, #e0e, #f00); }
.edit .spectrum { margin-bottom: 3px; }
.workspace { position: relative; height: 922px; flex: none; display: flex; background: linear-gradient(#c5cfe0, #dde5f2); }
.sheet { position: relative; width: 1554px; height: 918px; margin: 4px 0 0 4px; background: #fefefe; }
.handle { position: absolute; width: 4px; height: 4px; right: -3px; top: 461px; border: 1px solid #667; background: #fff; box-sizing: border-box; }
.surround { flex: 1; margin-top: 8px; background: linear-gradient(90deg, #aeb9d2, #bcc8de 4px, transparent 9px); }
.scrollbar { width: 13px; display: flex; flex-direction: column; background: #f1f2f3; }
.scrollbar .thumb { flex: 1; margin: 0 0 0 1px; background: #cdcdcd; }
.watermark { position: absolute; left: 1554px; top: 819px; display: flex; flex-direction: column; color: #b1b6bd; white-space: nowrap; }
.watermark strong { font-weight: 400; font-size: 24px; line-height: 34px; }
.watermark span { font-size: 17.35px; line-height: 26px; }
.edge { position: relative; height: 6px; flex: none; box-sizing: border-box; border-top: 1px solid #dfb85c; background: linear-gradient(90deg, #b7b8ba 1557px, #949db1 1557px, #a2abbd 1563px); margin-top: -1px; }
.status { height: 19px; flex: none; display: flex; background: linear-gradient(#cdcdcd, #e7e7e8 45%, #f5f5f6); }
.cell { width: 117px; box-sizing: border-box; padding: 1px 0 0 2px; border-right: 1px solid #cfcfd0; display: flex; align-items: center; gap: 3px; color: #333; }
.wide { width: 1304px; }
.zoom { display: flex; align-items: center; padding: 1px 0 0 15px; gap: 6px; color: #333; }
.taskbar { height: 30px; flex: none; display: flex; align-items: center; background: linear-gradient(90deg, #202020, #252423 17%, #2c2725 28%, #222 45%, #302521 76%, #30241f 83%, #202225 90%, #28221f 97%, #202020); color: #fff; }
.slot { width: 37.5px; height: 30px; flex: none; display: flex; align-items: center; justify-content: center; box-sizing: border-box; }
.sys { width: 36px; }
.first { margin-left: 1.5px; }
.open { background: linear-gradient(#aaa, #aaa) center bottom / 30px 2px no-repeat; }
.current { background: linear-gradient(#c1c1c1, #c1c1c1) center bottom / 37px 2px no-repeat, #4a4a4a; }
.tray { margin-right: 11px; }
.clock { width: 46px; margin-right: 6px; display: flex; flex-direction: column; align-items: center; line-height: 14px; white-space: nowrap; font-size: 8.9px; }
.note { font-family: Roboto, "Liberation Sans", sans-serif; }
</style>
